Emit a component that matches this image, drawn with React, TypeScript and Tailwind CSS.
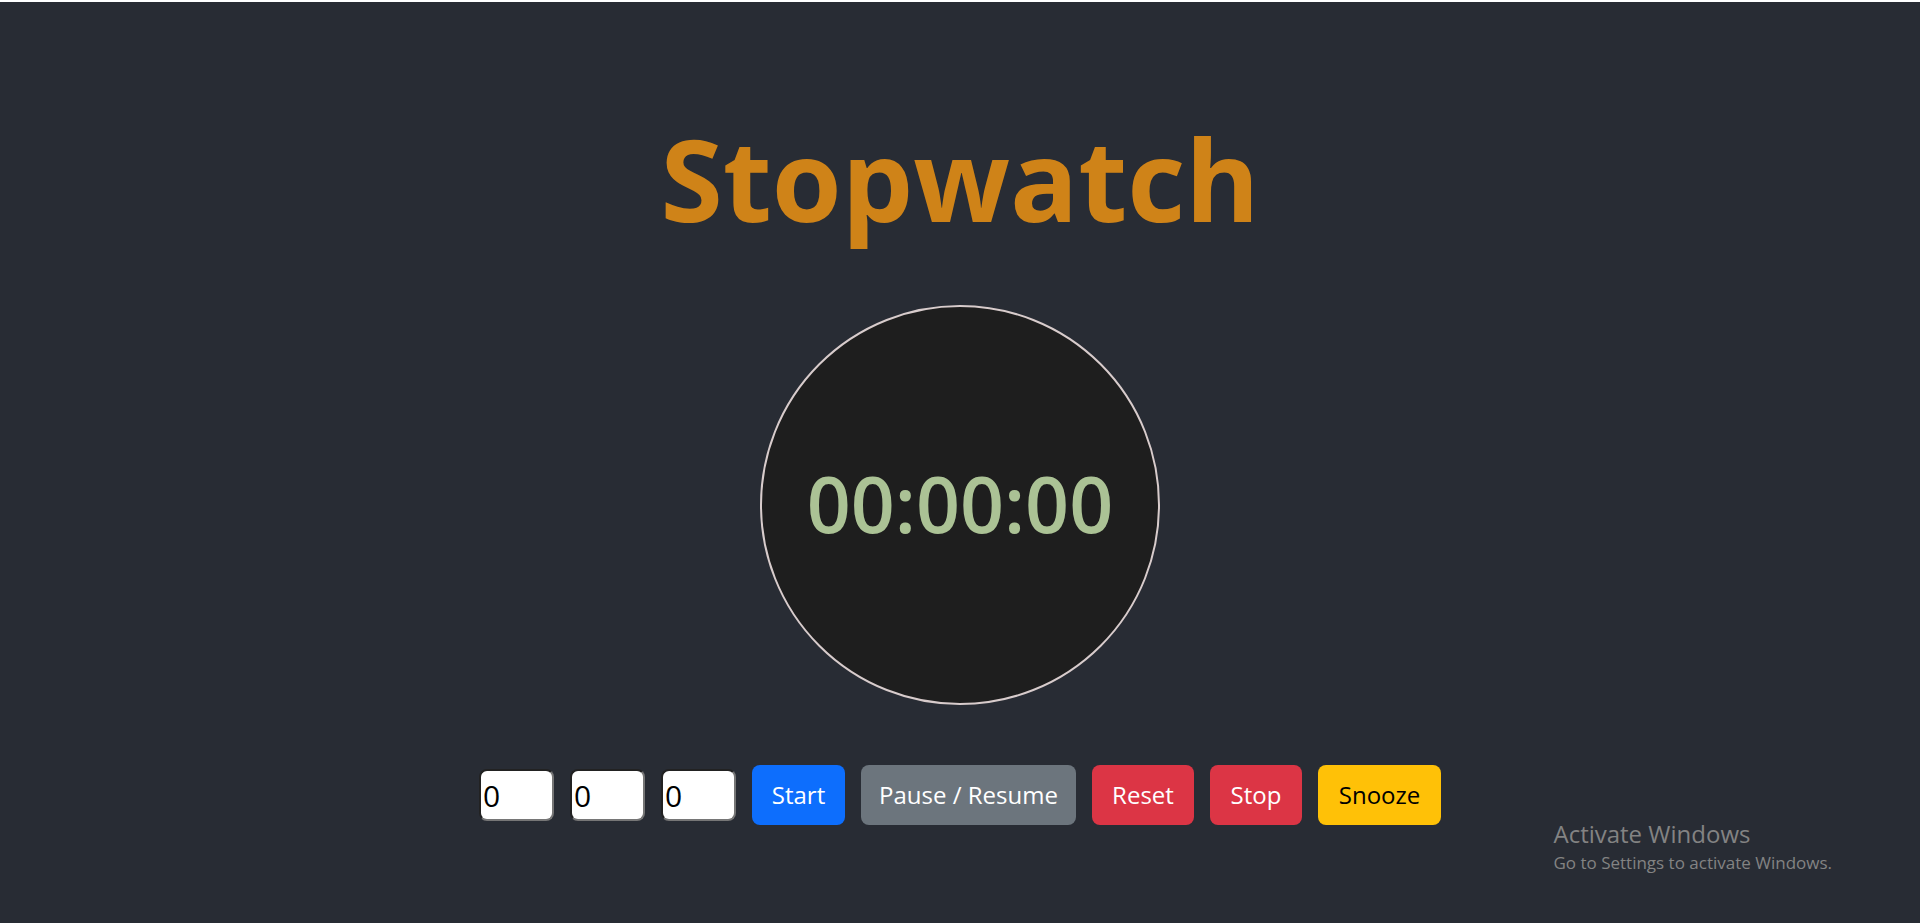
import { useState } from "react";

const button = "h-15 rounded-lg text-[24px] leading-[36px]";

export default function App() {
  const [values, setValues] = useState(["0", "0", "0"]);
  return (
    <div className="relative min-h-screen border-t-2 border-white bg-[#282c34] font-['Open_Sans','Noto_Sans',sans-serif]">
      <main className="flex flex-col items-center pt-[104px]">
        <h1 className="text-[113px] leading-[144px] font-bold text-[#cf8318]">Stopwatch</h1>
        <div className="mt-[55px] flex size-[400px] items-center justify-center rounded-full border-2 border-[#d8cccc] bg-[#1e1e1e]">
          <time className="pb-0.5 text-[77px] leading-[96px] font-semibold text-[#abc295]">00:00:00</time>
        </div>
        <form className="mt-[60px] flex items-center gap-4" onSubmit={(e) => e.preventDefault()}>
          {["Hours", "Minutes", "Seconds"].map((label, i) => (
            <input
              key={label}
              type="text"
              inputMode="numeric"
              aria-label={label}
              value={values[i]}
              onChange={(e) => setValues(values.map((v, j) => (j === i ? e.target.value : v)))}
              className="h-[52px] w-[75px] rounded-lg border-2 border-t-[#222222] border-r-[#767676] border-b-[#767676] border-l-[#222222] bg-white px-0.5 text-[30px] text-black"
            />
          ))}
          <button type="button" className={`${button} w-[93px] bg-[#0d6efd] text-white`}>Start</button>
          <button type="button" className={`${button} w-[215px] bg-[#6c757d] text-white`}>Pause / Resume</button>
          <button type="button" className={`${button} w-[102px] bg-[#dc3545] text-white`}>Reset</button>
          <button type="button" className={`${button} w-[92px] bg-[#dc3545] text-white`}>Stop</button>
          <button type="button" className={`${button} w-[123px] bg-[#ffc107] text-black`}>Snooze</button>
        </form>
      </main>
      <aside className="absolute right-[88px] bottom-12 text-[#838383]">
        <p className="text-[24px] leading-[34px]">Activate Windows</p>
        <p className="text-[17px] leading-[24px]">Go to Settings to activate Windows.</p>
      </aside>
    </div>
  );
}
